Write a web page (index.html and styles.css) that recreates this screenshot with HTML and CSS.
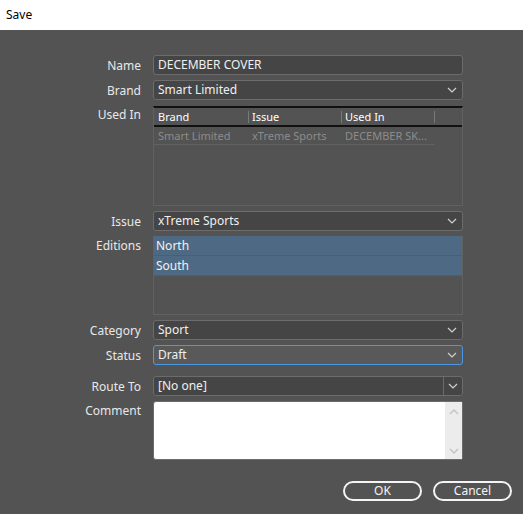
FILE: index.html
```html
<!DOCTYPE html>
<html lang="en">
<head>
    <meta charset="UTF-8">
    <title>Save</title>
    <link rel="stylesheet" href="styles.css">
</head>
<body>
    <div class="titlebar">Save</div>

    <div class="form">
        <label class="label">Name</label>
        <div class="field">DECEMBER COVER</div>

        <label class="label">Brand</label>
        <div class="field select">
            <span>Smart Limited</span>
            <svg class="chev" width="10" height="6" viewBox="0 0 10 6"><path d="M1 1l4 4 4-4" fill="none" stroke="#d0d0d0" stroke-width="1.2"/></svg>
        </div>

        <label class="label top">Used In</label>
        <div class="usedin">
            <table>
                <thead>
                    <tr><th>Brand</th><th>Issue</th><th>Used In</th><th class="filler"></th></tr>
                </thead>
                <tbody>
                    <tr><td>Smart Limited</td><td>xTreme Sports</td><td>DECEMBER SK...</td><td class="filler"></td></tr>
                </tbody>
            </table>
        </div>

        <label class="label">Issue</label>
        <div class="field select">
            <span>xTreme Sports</span>
            <svg class="chev" width="10" height="6" viewBox="0 0 10 6"><path d="M1 1l4 4 4-4" fill="none" stroke="#d0d0d0" stroke-width="1.2"/></svg>
        </div>

        <label class="label top">Editions</label>
        <div class="editions">
            <div class="edition">North</div>
            <div class="edition">South</div>
        </div>

        <label class="label">Category</label>
        <div class="field select">
            <span>Sport</span>
            <svg class="chev" width="10" height="6" viewBox="0 0 10 6"><path d="M1 1l4 4 4-4" fill="none" stroke="#d0d0d0" stroke-width="1.2"/></svg>
        </div>

        <label class="label">Status</label>
        <div class="field select focused">
            <span>Draft</span>
            <svg class="chev" width="10" height="6" viewBox="0 0 10 6"><path d="M1 1l4 4 4-4" fill="none" stroke="#d0d0d0" stroke-width="1.2"/></svg>
        </div>

        <label class="label gap">Route To</label>
        <div class="field combo gap">
            <span class="combo-text">[No one]</span>
            <span class="combo-btn">
                <svg width="10" height="6" viewBox="0 0 10 6"><path d="M1 1l4 4 4-4" fill="none" stroke="#d0d0d0" stroke-width="1.2"/></svg>
            </span>
        </div>

        <label class="label top">Comment</label>
        <div class="comment">
            <div class="comment-text"></div>
            <div class="scrollbar">
                <svg width="10" height="6" viewBox="0 0 10 6"><path d="M1 5l4-4 4 4" fill="none" stroke="#c2c2c2" stroke-width="1.3"/></svg>
                <svg width="10" height="6" viewBox="0 0 10 6"><path d="M1 1l4 4 4-4" fill="none" stroke="#c2c2c2" stroke-width="1.3"/></svg>
            </div>
        </div>
    </div>

    <div class="buttons">
        <button class="btn">OK</button>
        <button class="btn">Cancel</button>
    </div>
</body>
</html>
```

FILE: styles.css
```css
body {
    margin: 0;
    background: #535353;
    font-family: "Noto Sans", "Open Sans", sans-serif;
    font-size: 12px;
    color: #e8e8e8;
    height: 514px;
    overflow: hidden;
}

.titlebar {
    background: #fff;
    color: #000;
    height: 30px;
    line-height: 30px;
    padding-left: 6px;
}

.form {
    display: grid;
    grid-template-columns: 141px 310px;
    column-gap: 12px;
    row-gap: 5px;
    padding-top: 25px;
}

.label {
    text-align: right;
    align-self: center;
    color: #e8e8e8;
}

.label.top {
    align-self: start;
    margin-top: 1px;
}

.gap {
    margin-top: 6px;
}

.field {
    height: 18px;
    line-height: 18px;
    background: #454545;
    border: 1px solid #6c6c6c;
    border-radius: 3px;
    padding: 0 4px;
    color: #f0f0f0;
}

.select {
    display: flex;
    justify-content: space-between;
    align-items: center;
}

.chev {
    margin-right: 1px;
}

.focused {
    background: #595959;
    border-color: #4a97e6;
}

.combo {
    display: flex;
    padding: 0;
}

.combo-text {
    flex: 1;
    padding-left: 4px;
}

.combo-btn {
    width: 18px;
    border-left: 1px solid #6c6c6c;
    display: flex;
    align-items: center;
    justify-content: center;
}

/* Used In table */
.usedin {
    height: 97px;
    border: 1px solid #616161;
    border-top: 2px solid #111;
    margin-top: 1px;
}

.usedin table {
    border-collapse: collapse;
    width: 100%;
    table-layout: fixed;
    font-size: 11px;
}

.usedin th {
    text-align: left;
    font-weight: normal;
    color: #fff;
    height: 17px;
    padding: 0 3px;
    border-bottom: 2px solid #111;
    background-image: linear-gradient(#7a7a7a, #7a7a7a);
    background-size: 1px 12px;
    background-repeat: no-repeat;
    background-position: right center;
}

.usedin td {
    color: #8c8c8c;
    height: 17px;
    padding: 0 3px;
    border-bottom: 1px solid #616161;
    white-space: nowrap;
    overflow: hidden;
}

.usedin th:nth-child(1),
.usedin td:nth-child(1) { width: 88px; padding-left: 4px; }
.usedin th:nth-child(2),
.usedin td:nth-child(2) { width: 87px; }
.usedin th:nth-child(3),
.usedin td:nth-child(3) { width: 87px; }

.usedin th.filler {
    background-image: none;
}

.usedin td.filler {
    border-bottom: none;
}

/* Editions list */
.editions {
    height: 78px;
    border: 1px solid #616161;
    border-top: none;
}

.edition {
    height: 19px;
    line-height: 19px;
    background: #4e6983;
    border-bottom: 1px solid #5b5b5b;
    padding-left: 2px;
    color: #f2f2f2;
}

/* Comment box */
.comment {
    height: 57px;
    background: #fff;
    border: 1px solid #6c6c6c;
    border-radius: 3px;
    display: flex;
}

.comment-text {
    flex: 1;
}

.scrollbar {
    width: 17px;
    background: #ececec;
    display: flex;
    flex-direction: column;
    justify-content: space-between;
    align-items: center;
    padding: 7px 0 5px;
}

.buttons {
    display: flex;
    justify-content: flex-end;
    gap: 11px;
    padding: 21px 11px 0 0;
}

.btn {
    width: 79px;
    height: 20px;
    background: transparent;
    border: 2px solid #f4f4f4;
    border-radius: 10px;
    color: #f4f4f4;
    font-family: "Noto Sans", "Open Sans", sans-serif;
    font-size: 12px;
    padding: 0;
    line-height: 16px;
}
```
